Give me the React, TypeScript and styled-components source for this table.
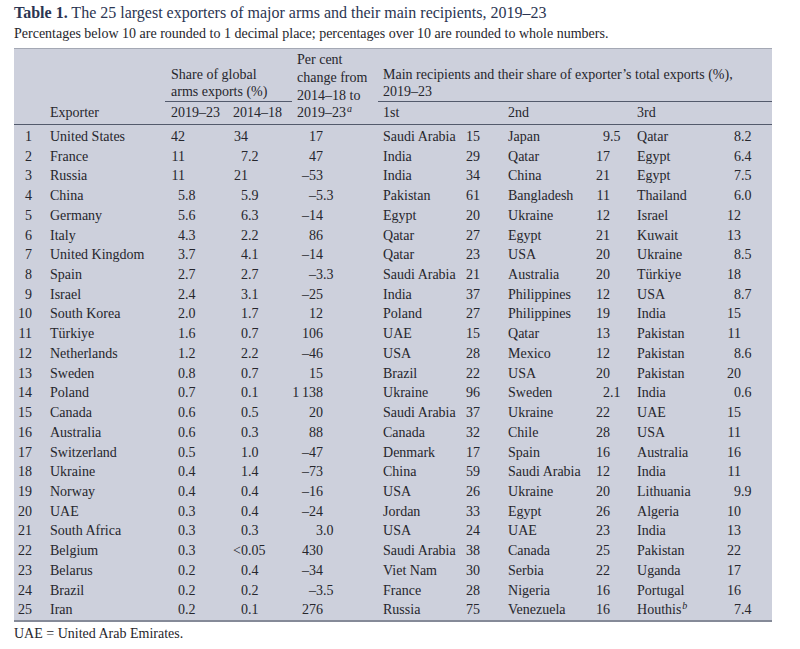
import React from "react";
import styled, { createGlobalStyle } from "styled-components";

const GlobalStyle = createGlobalStyle`
  html, body { margin: 0; padding: 0; background: #ffffff; }
  body {
    font-family: "Liberation Serif", "Times New Roman", serif;
    color: #26262c;
  }
`;

const Page = styled.div`
  width: 758px;
  padding: 3px 28px 0 14px;
`;

const Title = styled.h1`
  margin: 0;
  font-size: 16px;
  line-height: 20px;
  font-weight: normal;
  color: #2b3552;
  white-space: nowrap;
  strong { font-weight: bold; }
`;

const Subtitle = styled.p`
  margin: 2px 0 0;
  font-size: 14px;
  line-height: 18px;
  color: #26262c;
  white-space: nowrap;
`;

const Table = styled.table`
  margin-top: 5px;
  width: 758px;
  table-layout: fixed;
  border-collapse: collapse;
  background: #cdd0dc;
  border-top: 1px solid #a4a8b4;
  border-bottom: 2px solid #858a98;
  font-size: 14px;
`;

const HeadRow = styled.tr<{ $h: number }>`
  height: ${(p) => p.$h}px;
`;

const HeadCell = styled.th<{ $pl?: number; $line?: boolean; $valign?: string }>`
  font-weight: normal;
  text-align: left;
  vertical-align: ${(p) => p.$valign || "bottom"};
  padding: 0 0 0 ${(p) => p.$pl ?? 0}px;
  line-height: 17.7px;
  white-space: nowrap;
  border-bottom: ${(p) => (p.$line ? "1px solid #535a6c" : "none")};
`;

const BodyRow = styled.tr<{ $first?: boolean }>`
  td {
    padding-top: ${(p) => (p.$first ? 2 : 0)}px;
  }
`;

const Cell = styled.td<{ $pl?: number; $right?: number }>`
  height: 19.72px;
  line-height: 19.72px;
  padding: 0 ${(p) => p.$right ?? 0}px 0 ${(p) => p.$pl ?? 0}px;
  text-align: ${(p) => (p.$right !== undefined ? "right" : "left")};
  white-space: nowrap;
`;

const Int = styled.span<{ $w: number }>`
  display: inline-block;
  width: ${(p) => p.$w}px;
  text-align: right;
`;

const Frac = styled.span`
  display: inline-block;
`;

const Sup = styled.sup`
  font-style: italic;
  font-size: 10px;
  line-height: 0;
  vertical-align: 5px;
  margin-left: 1px;
`;

const Spacer = styled.div`
  height: 2px;
`;

const Note = styled.p`
  margin: 3px 0 0;
  font-size: 14px;
  line-height: 18px;
`;

const widths = [36, 115, 65, 62, 86, 84, 41, 87, 42, 83, 57];

type Row = [
  number,
  string,
  string,
  string,
  string,
  string,
  string,
  string,
  string,
  string,
  string
];

const rows: Row[] = [
  [1, "United States", "42", "34", "17", "Saudi Arabia", "15", "Japan", "9.5", "Qatar", "8.2"],
  [2, "France", "11", "7.2", "47", "India", "29", "Qatar", "17", "Egypt", "6.4"],
  [3, "Russia", "11", "21", "–53", "India", "34", "China", "21", "Egypt", "7.5"],
  [4, "China", "5.8", "5.9", "–5.3", "Pakistan", "61", "Bangladesh", "11", "Thailand", "6.0"],
  [5, "Germany", "5.6", "6.3", "–14", "Egypt", "20", "Ukraine", "12", "Israel", "12"],
  [6, "Italy", "4.3", "2.2", "86", "Qatar", "27", "Egypt", "21", "Kuwait", "13"],
  [7, "United Kingdom", "3.7", "4.1", "–14", "Qatar", "23", "USA", "20", "Ukraine", "8.5"],
  [8, "Spain", "2.7", "2.7", "–3.3", "Saudi Arabia", "21", "Australia", "20", "Türkiye", "18"],
  [9, "Israel", "2.4", "3.1", "–25", "India", "37", "Philippines", "12", "USA", "8.7"],
  [10, "South Korea", "2.0", "1.7", "12", "Poland", "27", "Philippines", "19", "India", "15"],
  [11, "Türkiye", "1.6", "0.7", "106", "UAE", "15", "Qatar", "13", "Pakistan", "11"],
  [12, "Netherlands", "1.2", "2.2", "–46", "USA", "28", "Mexico", "12", "Pakistan", "8.6"],
  [13, "Sweden", "0.8", "0.7", "15", "Brazil", "22", "USA", "20", "Pakistan", "20"],
  [14, "Poland", "0.7", "0.1", "1\u2009138", "Ukraine", "96", "Sweden", "2.1", "India", "0.6"],
  [15, "Canada", "0.6", "0.5", "20", "Saudi Arabia", "37", "Ukraine", "22", "UAE", "15"],
  [16, "Australia", "0.6", "0.3", "88", "Canada", "32", "Chile", "28", "USA", "11"],
  [17, "Switzerland", "0.5", "1.0", "–47", "Denmark", "17", "Spain", "16", "Australia", "16"],
  [18, "Ukraine", "0.4", "1.4", "–73", "China", "59", "Saudi Arabia", "12", "India", "11"],
  [19, "Norway", "0.4", "0.4", "–16", "USA", "26", "Ukraine", "20", "Lithuania", "9.9"],
  [20, "UAE", "0.3", "0.4", "–24", "Jordan", "33", "Egypt", "26", "Algeria", "10"],
  [21, "South Africa", "0.3", "0.3", "3.0", "USA", "24", "UAE", "23", "India", "13"],
  [22, "Belgium", "0.3", "<0.05", "430", "Saudi Arabia", "38", "Canada", "25", "Pakistan", "22"],
  [23, "Belarus", "0.2", "0.4", "–34", "Viet Nam", "30", "Serbia", "22", "Uganda", "17"],
  [24, "Brazil", "0.2", "0.2", "–3.5", "France", "28", "Nigeria", "16", "Portugal", "16"],
  [25, "Iran", "0.2", "0.1", "276", "Russia", "75", "Venezuela", "16", "Houthis", "7.4"],
];

const Num: React.FC<{ value: string; w: number }> = ({ value, w }) => {
  const i = value.indexOf(".");
  const int = i >= 0 ? value.slice(0, i) : value;
  const frac = i >= 0 ? value.slice(i) : "";
  return (
    <>
      <Int $w={w}>{int}</Int>
      {frac && <Frac>{frac}</Frac>}
    </>
  );
};

export default function App() {
  return (
    <>
      <GlobalStyle />
      <Page>
        <Title>
          <strong>Table 1.</strong> The 25 largest exporters of major arms and their main
          recipients, 2019–23
        </Title>
        <Subtitle>
          Percentages below 10 are rounded to 1 decimal place; percentages over 10 are rounded to
          whole numbers.
        </Subtitle>
        <Table>
          <colgroup>
            {widths.map((w, i) => (
              <col key={i} style={{ width: w }} />
            ))}
          </colgroup>
          <thead>
            <HeadRow $h={53}>
              <HeadCell colSpan={2} />
              <HeadCell colSpan={2} $pl={6} $line>
                Share of global
                <br />
                arms exports (%)
              </HeadCell>
              <HeadCell rowSpan={2} $pl={5} $line>
                Per cent
                <br />
                change from
                <br />
                2014–18 to
                <br />
                2019–23<Sup>a</Sup>
                <Spacer />
              </HeadCell>
              <HeadCell colSpan={6} $pl={5} $line>
                Main recipients and their share of exporter’s total exports (%),
                <br />
                2019–23
              </HeadCell>
            </HeadRow>
            <HeadRow $h={23}>
              <HeadCell $line $valign="middle" />
              <HeadCell $line $valign="middle">Exporter</HeadCell>
              <HeadCell $line $valign="middle" $pl={6}>2019–23</HeadCell>
              <HeadCell $line $valign="middle" $pl={3}>2014–18</HeadCell>
              <HeadCell colSpan={2} $line $valign="middle" $pl={5}>1st</HeadCell>
              <HeadCell colSpan={2} $line $valign="middle" $pl={5}>2nd</HeadCell>
              <HeadCell colSpan={2} $line $valign="middle" $pl={5}>3rd</HeadCell>
            </HeadRow>
          </thead>
          <tbody>
            {rows.map((r, idx) => (
              <BodyRow key={r[0]} $first={idx === 0}>
                <Cell $right={18}>{r[0]}</Cell>
                <Cell>{r[1]}</Cell>
                <Cell>
                  <Num value={r[2]} w={20} />
                </Cell>
                <Cell>
                  <Num value={r[3]} w={18} />
                </Cell>
                <Cell>
                  <Num value={r[4]} w={31} />
                </Cell>
                <Cell $pl={5}>{r[5]}</Cell>
                <Cell>
                  <Num value={r[6]} w={18} />
                </Cell>
                <Cell $pl={5}>{r[7]}</Cell>
                <Cell>
                  <Num value={r[8]} w={20} />
                </Cell>
                <Cell $pl={5}>
                  {r[9]}
                  {r[9] === "Houthis" && <Sup>b</Sup>}
                </Cell>
                <Cell>
                  <Num value={r[10]} w={26} />
                </Cell>
              </BodyRow>
            ))}
          </tbody>
        </Table>
        <Note>UAE = United Arab Emirates.</Note>
      </Page>
    </>
  );
}
